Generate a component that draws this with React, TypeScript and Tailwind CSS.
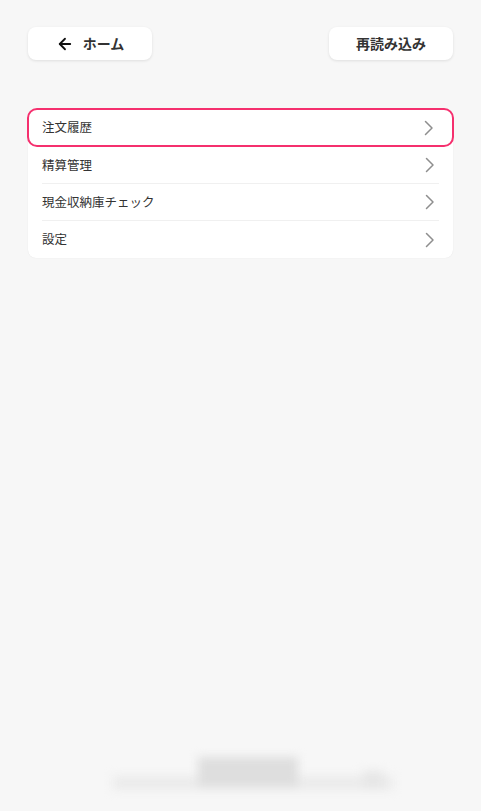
import { ArrowLeft } from "lucide-react";

const items = ["注文履歴", "精算管理", "現金収納庫チェック", "設定"];

function Chevron() {
  return (
    <svg width="10" height="16" viewBox="0 0 10 16" fill="none" className="text-[#8e8e8e]">
      <path d="M1.5 1.5 L8 8 L1.5 14.5" stroke="currentColor" strokeWidth="1.5" strokeLinecap="round" strokeLinejoin="round" />
    </svg>
  );
}

export default function App() {
  return (
    <div
      className="w-[481px] h-[811px] bg-[#f7f7f7] flex flex-col px-[28px] pt-[27px] text-[#333]"
      style={{ fontFamily: '"Noto Sans CJK JP", "Noto Sans", sans-serif' }}
    >
      <div className="flex justify-between">
        <button className="w-[124px] h-[33px] bg-white rounded-lg shadow-[0_1px_3px_rgba(0,0,0,0.1)] flex items-center justify-center gap-[9px] text-[14px] font-bold text-[#333]">
          <ArrowLeft size={18} strokeWidth={2.4} className="text-[#111]" />
          ホーム
        </button>
        <button className="w-[124px] h-[33px] bg-white rounded-lg shadow-[0_1px_3px_rgba(0,0,0,0.1)] flex items-center justify-center text-[14px] font-bold text-[#333]">
          再読み込み
        </button>
      </div>

      <div className="mt-[49px] bg-white rounded-[8px] shadow-[0_0_1px_rgba(0,0,0,0.12)] flex flex-col">
        {items.map((label, i) => (
          <div
            key={label}
            className={
              i === 0
                ? "h-[39px] -mx-[1px] -mt-[1px] flex items-center justify-between pl-[13px] pr-[18px] border-2 border-[#f5306e] rounded-[10px]"
                : "h-[37px] mx-[14px] flex items-center justify-between pr-[4px] " +
                  (i < items.length - 1 ? "border-b border-[#f0f0f0]" : "")
            }
          >
            <span className="text-[12.5px]">{label}</span>
            <Chevron />
          </div>
        ))}
      </div>

      <div className="flex-1" />

      <div className="relative h-[50px] mb-[12px] blur-[5px]">
        <div className="absolute left-[85px] top-[27px] w-[280px] h-[14px] bg-[#ebebeb]" />
        <div className="absolute left-[170px] top-[8px] w-[100px] h-[30px] bg-[#dedede]" />
        <div className="absolute left-[335px] top-[22px] w-[20px] h-[18px] bg-[#e6e6e6]" />
      </div>
    </div>
  );
}
